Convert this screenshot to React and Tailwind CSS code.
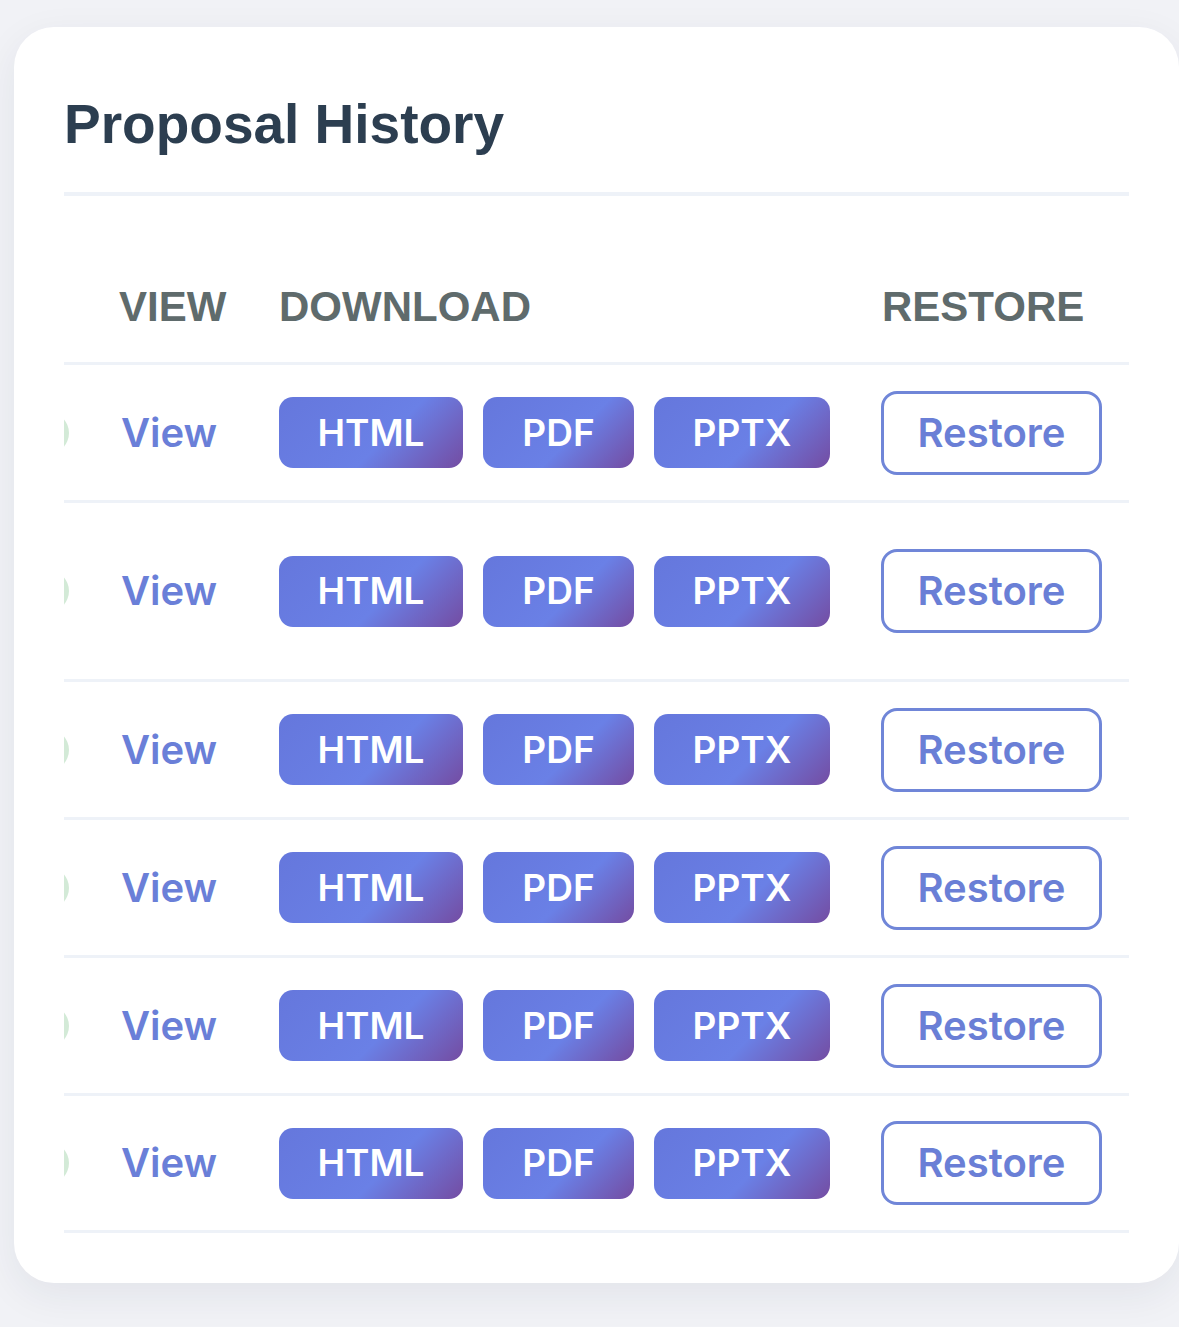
import React from "react";

const rows = [
  { h: "h-[138px]" },
  { h: "h-[179px]" },
  { h: "h-[138px]" },
  { h: "h-[138px]" },
  { h: "h-[138px]" },
  { h: "h-[137px]" },
];

const btn =
  "h-[71px] rounded-[14px] flex items-center justify-center text-white font-semibold text-[37px] bg-[linear-gradient(135deg,#6577dc_0%,#6a80e6_58%,#744ca2_100%)]";

function Row({ h }) {
  return (
    <div className={`flex items-center ${h} border-b-[3px] border-[#eef2f8]`}>
      <div className="w-[55px] shrink-0 flex items-center">
        <div className="-ml-[95px] w-[100px] h-[42px] rounded-full bg-[#d3ead7] shrink-0" />
      </div>
      <div className="w-[160px] shrink-0 pl-[2px] text-[40px] font-semibold text-[#6a7fd8] leading-none">
        View
      </div>
      <div className="w-[602px] shrink-0 flex gap-[20px]">
        <div className={`${btn} w-[184px]`}>HTML</div>
        <div className={`${btn} w-[151px]`}>PDF</div>
        <div className={`${btn} w-[176px]`}>PPTX</div>
      </div>
      <div className="flex">
        <div className="w-[221px] h-[84px] rounded-[16px] border-[3px] border-[#7086d8] flex items-center justify-center text-[40px] font-semibold text-[#6a7fd6] bg-white">
          Restore
        </div>
      </div>
    </div>
  );
}

export default function App() {
  return (
    <div
      className="min-h-[1327px] bg-[#f1f2f6] pt-[27px] pl-[14px] overflow-hidden"
      style={{ fontFamily: "Inter, 'Noto Sans', sans-serif" }}
    >
      <div className="w-[1165px] h-[1256px] bg-white rounded-[40px] shadow-[0_12px_40px_rgba(30,40,70,0.07)] px-[50px] pt-[70px]">
        <h1
          className="text-[55px] font-bold text-[#2c3e50] leading-none"
          style={{ fontFamily: "'Liberation Sans', Arial, sans-serif" }}
        >
          Proposal History
        </h1>
        <div className="mt-[40px] h-[4px] bg-[#eef2f8]" />
        <div className="mt-[54px] overflow-hidden">
          <div
            className="flex items-center h-[115px] border-b-[3px] border-[#eef2f8] text-[42px] font-bold text-[#5f6b6c]"
            style={{ fontFamily: "'Liberation Sans', Arial, sans-serif" }}
          >
            <div className="w-[55px] shrink-0" />
            <div className="w-[160px] shrink-0">VIEW</div>
            <div className="w-[602px] shrink-0">DOWNLOAD</div>
            <div className="pl-[1px]">RESTORE</div>
          </div>
          {rows.map((r, i) => (
            <Row key={i} h={r.h} />
          ))}
        </div>
      </div>
    </div>
  );
}
